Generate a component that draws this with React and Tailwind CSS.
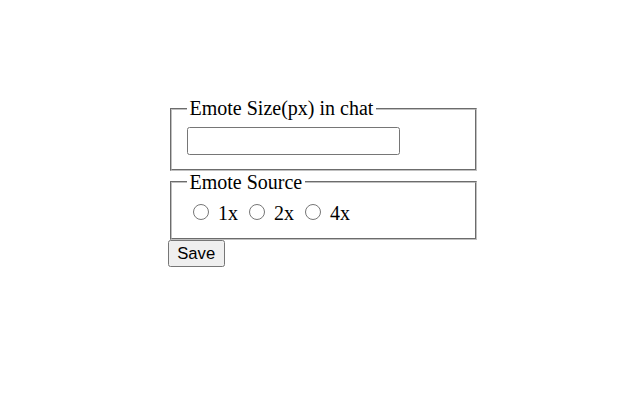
export default function App() {
  return (
    <div className="min-h-[400px] w-[640px] bg-white pt-[97px] pl-[167.5px] font-['Liberation_Serif',serif] text-[20px] text-black">
      <form className="w-[312px]">
        <fieldset className="mx-[2.5px] border-[2.5px] [border-style:groove] border-[#c0c0c0] px-[15px] pt-[7px] pb-[13.5px]">
          <legend className="px-[2.5px] leading-[23px]">Emote Size(px) in chat</legend>
          <input
            type="text"
            className="block h-[28px] w-[213px] rounded-[2.5px] border-[1.25px] border-[#767676] bg-white px-[2.5px] text-[16.67px] font-['Liberation_Sans',sans-serif]"
          />
        </fieldset>
        <fieldset className="mx-[2.5px] border-[2.5px] [border-style:groove] border-[#c0c0c0] px-[15px] pt-[7px] pb-[13.5px]">
          <legend className="px-[2.5px] leading-[23px]">Emote Source</legend>
          <div className="leading-[23px]">
            <input type="radio" name="src" id="s1" className="ml-[6.25px] mr-[3.75px] mt-[3.75px] h-[16px] w-[16px] align-[-1px]" />{' '}
            <label htmlFor="s1">1x</label>{' '}
            <input type="radio" name="src" id="s2" className="ml-[6.25px] mr-[3.75px] mt-[3.75px] h-[16px] w-[16px] align-[-1px]" />{' '}
            <label htmlFor="s2">2x</label>{' '}
            <input type="radio" name="src" id="s4" className="ml-[6.25px] mr-[3.75px] mt-[3.75px] h-[16px] w-[16px] align-[-1px]" />{' '}
            <label htmlFor="s4">4x</label>
          </div>
        </fieldset>
        <button
          type="button"
          className="block h-[27px] rounded-[2.5px] border-[1.25px] border-[#767676] bg-[#efefef] px-[8.75px] font-['Liberation_Sans',sans-serif] text-[16.67px] leading-[19px] text-black"
        >
          Save
        </button>
      </form>
    </div>
  );
}
